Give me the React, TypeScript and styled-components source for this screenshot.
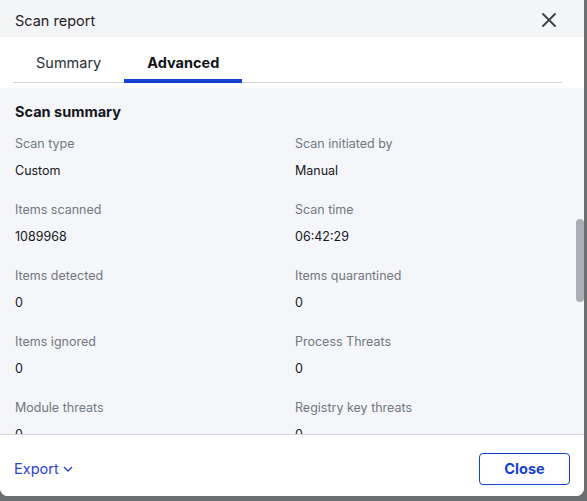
import React, { useState } from "react";
import styled, { createGlobalStyle } from "styled-components";

const GlobalStyle = createGlobalStyle`
  html, body {
    margin: 0;
    padding: 0;
    background: #6d6e70;
  }
  body {
    font-family: Inter, "Noto Sans", sans-serif;
    -webkit-font-smoothing: antialiased;
  }
  * { box-sizing: border-box; }
`;

const Backdrop = styled.div`
  width: 587px;
  height: 501px;
  display: flex;
  align-items: flex-start;
  background: #6d6e70;
`;

const Dialog = styled.div`
  width: 584px;
  height: 496px;
  display: flex;
  flex-direction: column;
  background: #ffffff;
  border-radius: 0 0 8px 8px;
  overflow: hidden;
`;

const Header = styled.div`
  height: 37px;
  flex: none;
  display: flex;
  align-items: center;
  justify-content: space-between;
  padding: 3px 28px 0 15px;
  background: #f4f5f7;
`;

const Title = styled.div`
  font-size: 14.5px;
  color: #1f2126;
`;

const IconButton = styled.button`
  border: 0;
  background: none;
  padding: 0;
  display: flex;
  cursor: pointer;
`;

const TabBar = styled.div`
  height: 51px;
  flex: none;
  display: flex;
  align-items: flex-end;
  background: #ffffff;
  padding: 0 22px 5px 13px;
`;

const TabStrip = styled.div`
  flex: 1;
  display: flex;
  border-bottom: 1px solid #d3d5dc;
`;

const Tab = styled.button<{ $active?: boolean }>`
  border: 0;
  background: none;
  padding: 0 23px 8px;
  margin-bottom: -1px;
  font-family: inherit;
  font-size: 14.5px;
  font-weight: ${(p) => (p.$active ? 700 : 400)};
  color: ${(p) => (p.$active ? "#111318" : "#2a2d34")};
  border-bottom: 4px solid ${(p) => (p.$active ? "#1341cf" : "transparent")};
  cursor: pointer;
`;

const Body = styled.div`
  flex: 1;
  position: relative;
  overflow: hidden;
  background: #f5f6f9;
  border-bottom: 1px solid #d4d6dc;
`;

const Scroll = styled.div`
  padding: 15px 15px 0;
`;

const SectionTitle = styled.div`
  font-size: 14.5px;
  font-weight: 700;
  color: #15171c;
  margin-bottom: 15px;
`;

const Grid = styled.div`
  display: grid;
  grid-template-columns: 280px 1fr;
  row-gap: 22px;
`;

const Field = styled.div`
  display: flex;
  flex-direction: column;
  gap: 10px;
`;

const Label = styled.div`
  font-size: 12.5px;
  line-height: 17px;
  color: #72767f;
`;

const Value = styled.div`
  font-size: 12.5px;
  line-height: 17px;
  color: #16181d;
`;

const Thumb = styled.div`
  position: absolute;
  right: 0;
  top: 131px;
  width: 8px;
  height: 83px;
  border-radius: 4px;
  background: #a9aeb6;
`;

const Footer = styled.div`
  height: 61px;
  flex: none;
  display: flex;
  align-items: center;
  justify-content: space-between;
  padding: 6px 14px 0 14px;
  background: #ffffff;
`;

const ExportLink = styled.button`
  border: 0;
  background: none;
  padding: 0;
  display: flex;
  align-items: center;
  gap: 4px;
  font-family: inherit;
  font-size: 14.5px;
  color: #2f3fd3;
  cursor: pointer;
`;

const OutlineButton = styled.button`
  width: 91px;
  height: 32px;
  border: 1px solid #1341cf;
  border-radius: 4px;
  background: #ffffff;
  font-family: inherit;
  font-size: 14.5px;
  font-weight: 700;
  color: #1341cf;
  cursor: pointer;
`;

const fields: [string, string][] = [
  ["Scan type", "Custom"],
  ["Scan initiated by", "Manual"],
  ["Items scanned", "1089968"],
  ["Scan time", "06:42:29"],
  ["Items detected", "0"],
  ["Items quarantined", "0"],
  ["Items ignored", "0"],
  ["Process Threats", "0"],
  ["Module threats", "0"],
  ["Registry key threats", "0"],
  ["File threats", "0"],
  ["Folder threats", "0"],
];

export default function App() {
  const [tab, setTab] = useState("advanced");

  return (
    <Backdrop>
      <GlobalStyle />
      <Dialog>
        <Header>
          <Title>Scan report</Title>
          <IconButton aria-label="Close">
            <svg width="14" height="14" viewBox="0 0 14 14">
              <path d="M1 1L13 13M13 1L1 13" stroke="#3b3e45" strokeWidth="1.8" strokeLinecap="round" />
            </svg>
          </IconButton>
        </Header>
        <TabBar>
          <TabStrip>
            <Tab $active={tab === "summary"} onClick={() => setTab("summary")}>
              Summary
            </Tab>
            <Tab $active={tab === "advanced"} onClick={() => setTab("advanced")}>
              Advanced
            </Tab>
          </TabStrip>
        </TabBar>
        <Body>
          <Scroll>
            <SectionTitle>Scan summary</SectionTitle>
            <Grid>
              {fields.map(([label, value]) => (
                <Field key={label}>
                  <Label>{label}</Label>
                  <Value>{value}</Value>
                </Field>
              ))}
            </Grid>
          </Scroll>
          <Thumb />
        </Body>
        <Footer>
          <ExportLink>
            Export
            <svg width="10" height="6" viewBox="0 0 10 6">
              <path d="M1 1L5 5L9 1" stroke="#2f3fd3" strokeWidth="1.3" fill="none" />
            </svg>
          </ExportLink>
          <OutlineButton>Close</OutlineButton>
        </Footer>
      </Dialog>
    </Backdrop>
  );
}
